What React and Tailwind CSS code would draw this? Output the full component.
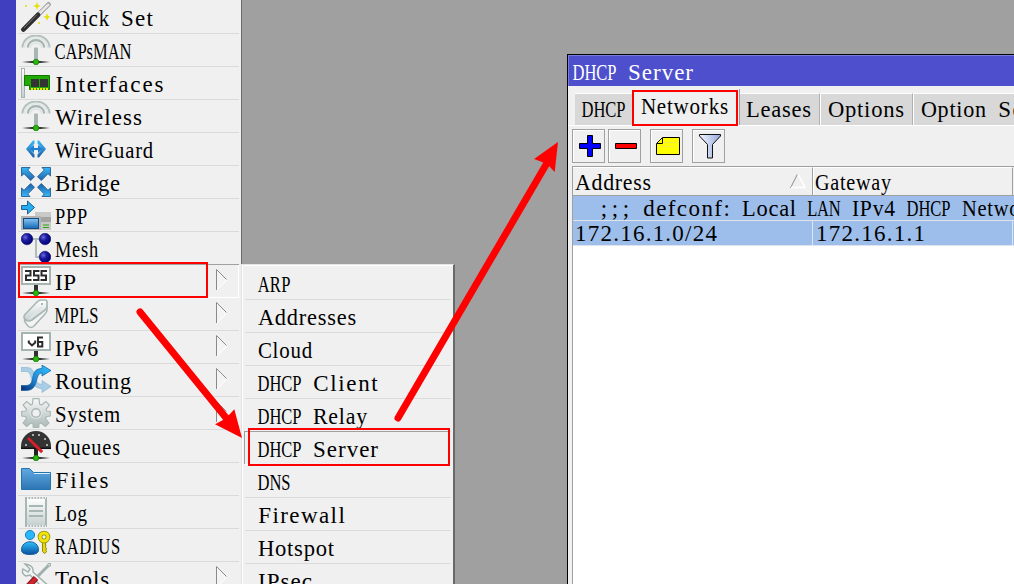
import React from "react";

const CELL = 11;
const ctx = document.createElement("canvas").getContext("2d");

// Fits a word in a row of fixed-width character cells.
function Word({ children }) {
  ctx.font = '23px "Liberation Serif"';
  const n = children.length;
  const natural = ctx.measureText(children).width;
  const scale = Math.min(1, Math.max(0.72, ((CELL * n) / natural) * 0.93));
  const spacing = CELL / scale - natural / n;
  return (
    <span className="inline-block" style={{ width: CELL * n }}>
      <span
        className="inline-block origin-left font-['Liberation_Serif',serif] text-[23px] leading-[26px]"
        style={{ letterSpacing: spacing, transform: `translateX(${(spacing * scale) / 2 - 0.5}px) scaleX(${scale})` }}
      >
        {children}
      </span>
    </span>
  );
}

function T({ children, className = "" }) {
  return (
    <span className={"block whitespace-pre font-['Liberation_Mono',monospace] text-[18.33px] leading-[26px] " + className}>
      {children.split(/( +)/).map((p, i) => (p.trim() ? <Word key={i}>{p}</Word> : p))}
    </span>
  );
}

function Defs() {
  const g = (id, a, b, horizontal) => (
    <linearGradient id={id} x1="0" y1="0" x2={horizontal ? 1 : 0} y2={horizontal ? 0 : 1}>
      <stop offset="0" stopColor={a} />
      <stop offset="1" stopColor={b} />
    </linearGradient>
  );
  return (
    <svg className="absolute h-0 w-0">
      <defs>
        {g("blue", "#2fc0ff", "#0b4f9c")}
        {g("sky", "#35b8fb", "#235fa3")}
        {g("folder", "#62a9e2", "#2b75b3")}
        {g("screen", "#86c5f5", "#1468b4")}
        {g("gray", "#ffffff", "#c5cfcf")}
        {g("funnel", "#f4f7ff", "#94a9dc", true)}
        <linearGradient id="gear" gradientUnits="userSpaceOnUse" x1="0" y1="0" x2="0" y2="30">
          <stop offset="0" stopColor="#fafafa" />
          <stop offset="1" stopColor="#a9b8b5" />
        </linearGradient>
        <linearGradient id="route" x1="0" y1="1" x2="1" y2="0">
          <stop offset="0" stopColor="#082a70" />
          <stop offset=".45" stopColor="#1e8ad8" />
          <stop offset="1" stopColor="#2fc2ff" />
        </linearGradient>
        <radialGradient id="ball" cx=".35" cy=".35" r=".6">
          <stop offset="0" stopColor="#6c6cd8" />
          <stop offset=".5" stopColor="#1a1aa0" />
          <stop offset="1" stopColor="#05057a" />
        </radialGradient>
        <linearGradient id="wire" x1="0" x2="1" y1="0" y2="0">
          <stop offset="0" stopColor="#333" stopOpacity="0" />
          <stop offset=".35" stopColor="#333" />
          <stop offset=".65" stopColor="#333" />
          <stop offset="1" stopColor="#333" stopOpacity="0" />
        </linearGradient>
      </defs>
    </svg>
  );
}

const Node = () => (
  <>
    <rect x="1" y="26" width="28" height="2" fill="url(#wire)" />
    <circle cx="15" cy="27" r="2.8" fill="#28b80c" stroke="#187c06" strokeWidth=".8" />
  </>
);

const Antenna = () => (
  <>
    <path d="M1.5 12.5a13.5 12 0 0 1 27 0" fill="none" stroke="#b3c0be" strokeWidth="2" />
    <path d="M3.3 13a11.7 10.3 0 0 1 23.4 0" fill="none" stroke="#e2e7e6" strokeWidth="1.5" />
    <path d="M6.8 12.5a8.2 7.4 0 0 1 16.4 0" fill="none" stroke="#a5b4b1" strokeWidth="2.2" />
    <path d="M9.2 13a5.8 5 0 0 1 11.6 0" fill="none" stroke="#dde3e2" strokeWidth="1.5" />
    <rect x="13" y="12.5" width="4" height="12" rx="1" fill="#a9b7b4" />
    <Node />
  </>
);

const bridgeArrow = "M.5.5H9L6.7 3 13.5 9.7 9.7 13.5 3 6.7.5 9Z";

const icons = {
  wand: (
    <>
      <path d="M2.5 27.5 27.5 2.500" stroke="#8f8f8f" strokeWidth="4.500" strokeLinecap="round" />
      <path d="M17.5 12.3 27.3 2.8" stroke="#e7e7e7" strokeWidth="2.800" strokeLinecap="round" />
      <path d="M2.5 27.5 17 12.8" stroke="#2f2f2f" strokeWidth="4.6" strokeLinecap="round" />
      <path d="M3 26 16 12.6" stroke="#777" strokeWidth="1" />
      <path d="M16 0l1.1 2.9L20 4l-2.9 1.1L16 8l-1.1-2.9L12 4l2.9-1.1ZM26 11l1.1 2.9L30 15l-2.9 1.1L26 19l-1.1-2.9L22 15l2.9-1.1Z" fill="#e3e10a" />
      <path d="M4 3h2v2H4ZM17 20h2v2h-2Z" fill="#e6e43c" />
    </>
  ),
  antenna: <Antenna />,
  card: (
    <>
      <rect x=".5" y=".5" width="3" height="29" fill="url(#gray)" stroke="#a6b3b1" />
      <path d="M3.5 7.5h25v14h-20v-4h-5Z" fill="#22aa04" stroke="#157503" />
      <path d="M10 11h8v8h-8ZM19 11h8v8h-8Z" fill="#333" />
      <path d="M10 21h18" stroke="#f0e800" strokeWidth="2" strokeDasharray="2 1" />
    </>
  ),
  wireguard: (
    <>
      <path d="M12 6.500h1.500v3L8.500 15l5 5.500v3H12L5 15ZM18 6.500h-1.500v3l5 5.500-5 5.500v3H18L25 15Z" fill="url(#sky)" />
      <path d="M8 15l5-4v3h4v-3l5 4-5 4v-3h-4v3Z" fill="#1c80d4" />
    </>
  ),
  bridge: (
    <g fill="url(#sky)" stroke="#235f96" strokeWidth=".9">
      <path d={bridgeArrow} />
      <path d={bridgeArrow} transform="matrix(-1 0 0 1 30 0)" />
      <path d={bridgeArrow} transform="matrix(1 0 0 -1 0 30)" />
      <path d={bridgeArrow} transform="matrix(-1 0 0 -1 30 30)" />
    </g>
  ),
  ppp: (
    <>
      <rect x="14" y="12" width="16" height="18" fill="#c9c9c9" />
      <path d="M20 19.500h10" stroke="#a3a3a3" strokeWidth="5" />
      <path d="M22 25h6M22 27.500h6" stroke="#28a70c" />
      <rect x="0" y="16" width="20" height="14" fill="#b3b3b3" />
      <rect x="2.500" y="18.500" width="15" height="10" fill="url(#screen)" stroke="#114c86" />
      <path d="M.5 5.500h6v-4.500l7 6.500-7 6.500V9.500h-6Z" fill="#25aef2" stroke="#1c6299" />
    </>
  ),
  mesh: (
    <>
      <path d="M6 6h18M15 6v18h9" fill="none" stroke="#b0bdba" strokeWidth="2" />
      <circle cx="6" cy="6" r="5.800" fill="url(#ball)" stroke="#00006a" strokeWidth=".5" />
      <circle cx="24" cy="6" r="5.800" fill="url(#ball)" stroke="#00006a" strokeWidth=".5" />
      <circle cx="24" cy="24" r="5.800" fill="url(#ball)" stroke="#00006a" strokeWidth=".5" />
    </>
  ),
  ip: (
    <>
      <rect x="1" y="1" width="28" height="17" fill="#fff" stroke="#a6b4b1" strokeWidth="2" />
      <path d="M4 5H9.500V9.500H5V14H10.500M18.500 5H13V9.500h4.500V14H12M26 5H20.500V9.500H25V14H19.500" fill="none" stroke="#2c2c2c" strokeWidth="2" />
      <rect x="13" y="19" width="4" height="7" fill="#303030" />
      <Node />
    </>
  ),
  mpls: (
    <g stroke="#a9b7b4" strokeWidth="1.600" strokeLinejoin="round">
      <path d="M3.500 17 16 3q2-2 4-2h4q2 0 2 2v4q0 2-2 4L13 23q-3 3-6 0t-3.500-6Z" fill="#f3f5f5" transform="translate(0 4)" />
      <path d="M3.500 16 16 3q2-2 4-2h4q2 0 2 2v4q0 2-2 4L11 21q-3 2-6 0t-1.500-5Z" fill="url(#gray)" />
      <path d="M9 20 21 8" stroke="#dfe5e4" />
      <circle cx="21" cy="5" r="1" fill="#93a5a1" stroke="none" />
    </g>
  ),
  ipv6: (
    <>
      <rect x="1" y="1" width="28" height="17" fill="#fff" stroke="#a6b4b1" strokeWidth="2" />
      <path d="M7.800 8.500v2l3.200 3 3.200-3v-2M22 5.500h-5v9h4.300V10H17" fill="none" stroke="#2c2c2c" strokeWidth="2" />
      <rect x="13" y="19" width="4" height="7" fill="#303030" />
      <Node />
    </>
  ),
  routing: (
    <>
      <path d="M0 2.500h6c11 0 5 17 15 17V15.500l9 6-9 6v-4c-14 0-8-17-16-17H0Z" fill="#a9cde5" stroke="#8db8d6" strokeWidth=".7" />
      <path d="M0 25.500v-5h5C16 20.500 7 3.500 21 3.500V0l9 5.500-9 5.500V8C13 8 19 25.500 5 25.500Z" fill="url(#route)" stroke="#135f9c" strokeWidth=".7" />
    </>
  ),
  gear: (
    <>
      <g fill="url(#gear)" stroke="#a9b8b5" strokeWidth="1.200">
        <path d="M12 .7h6l.6 5.500 2 .8 4.300-3.400 3.500 3.500-3.400 4.300.8 1.600 3.500.500v4.500l-4 .700-.8 2 3.400 4.200-3.500 3.500-4.300-3.400-2 .800-.500 4.500h-5.200l-.5-4.500-2-.8-4.300 3.400-3.500-3.500 3.400-4.200-.8-2-4-.7v-4.500l4-.5.8-1.600-3.400-4.300 3.500-3.500 4.300 3.400 1.500-.8Z" />
      </g>
      <circle cx="15" cy="15" r="6" fill="#dfe5e4" />
      <circle cx="15" cy="15" r="4.300" fill="#f0f0f0" stroke="#a9b8b5" strokeWidth="1.500" />
    </>
  ),
  gauge: (
    <>
      <path d="M0 18v-3a15 15 0 0 1 30 0v3Z" fill="#343434" />
      <path d="M0 17.300h30" stroke="#111" strokeWidth="1.500" />
      <path d="M4 13h2v2H4ZM11 3h2v2h-2ZM17 3h2v2h-2ZM23 7h2v2h-2ZM25 13h2v2h-2Z" fill="#aaa" />
      <path d="M7 7 21 21" stroke="#d71e2a" strokeWidth="2.600" />
      <rect x="13" y="18" width="4" height="8" fill="#222" />
      <path d="M13 13l8 8" stroke="#d71e2a" strokeWidth="2.600" />
      <Node />
    </>
  ),
  folder: (
    <>
      <path d="M.5 4.500h8l4 4h17v17H.5Z" fill="url(#folder)" stroke="#2674ad" />
      <path d="M13 9.500h16" stroke="#d8ecfa" />
    </>
  ),
  log: (
    <>
      <path d="M5 1h20v28H5Z" fill="url(#gray)" stroke="#a9b7b4" strokeWidth="2" />
      <path d="M6 1h19M6 29h19" stroke="#efefef" strokeWidth="2" strokeDasharray="1.500 1.500" />
      <path d="M8 9h14M8 14h14M8 19h14" stroke="#a9b7b4" strokeWidth="2" />
    </>
  ),
  radius: (
    <>
      <circle cx="9" cy="5" r="4.600" fill="#28b7fa" stroke="#217fbd" />
      <path d="M.5 20c0-11 17-11 17 0q0 4.500-8.500 4.500T.5 20Z" fill="url(#blue)" stroke="#1b619c" />
      <path d="M21.500 11v10.500l1.800 2 2.400-1.800-1-1.500 1-1.200-1-1.500V11" fill="#e3d80a" stroke="#938c0b" />
      <circle cx="23" cy="7" r="4" fill="none" stroke="#938c0b" strokeWidth="4.600" />
      <circle cx="23" cy="7" r="4" fill="none" stroke="#efe50a" strokeWidth="3" />
    </>
  ),
  tools: (
    <>
      <path d="M29 1 15 15" stroke="#9fafac" strokeWidth="3" />
      <path d="M27 .500h2.500V3H27Z" fill="#e4e8e7" stroke="#9fafac" />
      <path d="M4 1 9 6 7 9 2 6Q0 11 5 13l4-1L26 29l4-4L12 9q1-7-8-8Z" fill="#f2f4f4" stroke="#9fafac" strokeWidth="1.400" />
      <path d="M15 15 2 29" stroke="#7f1119" strokeWidth="6" />
      <path d="M15 15 2 29" stroke="#cf2430" strokeWidth="4" />
    </>
  ),
};

const MENU = [
  ["wand", "Quick Set"],
  ["antenna", "CAPsMAN"],
  ["card", "Interfaces"],
  ["antenna", "Wireless"],
  ["wireguard", "WireGuard"],
  ["bridge", "Bridge"],
  ["ppp", "PPP"],
  ["mesh", "Mesh"],
  ["ip", "IP", true],
  ["mpls", "MPLS", true],
  ["ipv6", "IPv6", true],
  ["routing", "Routing", true],
  ["gear", "System", true],
  ["gauge", "Queues"],
  ["folder", "Files"],
  ["log", "Log"],
  ["radius", "RADIUS"],
  ["tools", "Tools", true],
];

const SUBMENU = ["ARP", "Addresses", "Cloud", "DHCP Client", "DHCP Relay", "DHCP Server", "DNS", "Firewall", "Hotspot", "IPsec"];

function MenuRow({ icon, label, sub }) {
  const active = label === "IP";
  return (
    <div
      className={
        "flex h-[33px] shrink-0 items-center border-b pl-[3px] " +
        (active ? "border-r border-white shadow-[0_-1px_0_#a0a0a0]" : "border-[#dadada]")
      }
    >
      <svg className="h-[30px] w-[30px] shrink-0" viewBox="0 0 30 30" fill="none">{icons[icon]}</svg>
      <T className="ml-1 grow pt-[6px] text-black">{label}</T>
      {sub && (
        <svg className={"mb-0.5 h-[22px] w-[12px] shrink-0 " + (active ? "mr-[10px]" : "mr-[11px]")} viewBox="0 0 12 22">
          <path d="M.5.5v21L11.500 11Z" fill="#f4f4f4" />
          <path d="M1 21 11 11" stroke="#fff" />
          <path d="M.5 21V.5L10.500 10.500" fill="none" stroke="#8a8a8a" />
        </svg>
      )}
    </div>
  );
}

function ToolButton({ children, className = "" }) {
  return (
    <div className={"flex h-[34px] w-[33px] items-center justify-center border border-[#a0a0a0] bg-[#f0f0f0] pl-[2px] shadow-[inset_1px_1px_0_#fff] " + className}>
      {children}
    </div>
  );
}

function Tab({ children, className }) {
  return <div className={"h-8 shrink-0 border-t border-t-white bg-[#d8d8d8] pt-[3px] text-black " + className}><T>{children}</T></div>;
}

function DhcpWindow() {
  return (
    <section className="absolute left-[567px] top-[54px] flex h-[530px] w-[447px] flex-col overflow-hidden border-l border-t border-black bg-[#f0f0f0]">
      <header className="h-[31px] shrink-0 border-l border-t border-[#7b7ce0] bg-[#4d4fcc] pl-1 pt-1">
        <T className="text-white">DHCP Server</T>
      </header>
      <nav className="flex h-10 shrink-0 items-end border-b border-white pl-[7px] text-black">
        <Tab className="w-[57px] pl-[7px]">DHCP</Tab>
        <div className="h-9 w-[108px] shrink-0 border-r border-[#a0a0a0] bg-[#f0f0f0] pl-[9px] pt-[5px]">
          <T>Networks</T>
        </div>
        <Tab className="w-[80px] border-r border-r-[#b0b0b0] pl-[6px]">Leases</Tab>
        <Tab className="w-[93px] border-l border-r border-l-white border-r-[#b0b0b0] pl-[7px]">Options</Tab>
        <Tab className="w-[140px] border-l border-l-white pl-[7px]">Option Sets</Tab>
      </nav>
      <div className="flex h-10 shrink-0 items-start pl-1 pt-[3px]">
        <ToolButton>
          <svg width="22" height="22" viewBox="0 0 22 22"><path d="M8.500.5h5v8h8v5h-8v8h-5v-8h-8v-5h8Z" fill="#00f" stroke="#000" /></svg>
        </ToolButton>
        <ToolButton className="ml-[3px]">
          <svg width="22" height="6" viewBox="0 0 22 6"><path d="M.5.5h21v5H.5Z" fill="#f00" stroke="#000" /></svg>
        </ToolButton>
        <ToolButton className="ml-[9px]">
          <svg width="24" height="19" viewBox="0 0 24 19"><path d="M6.500.5h17v17H.5v-11Z" fill="#ff0" stroke="#000" /><path d="M6.500 1v5.500H1" fill="none" stroke="#000" /><path d="M8 5.500h12M4 9.500h15" stroke="#eee75b" strokeDasharray="4 1" /></svg>
        </ToolButton>
        <ToolButton className="ml-[9px]">
          <svg width="22" height="25" viewBox="0 0 22 25"><path d="M.5.5h21v1.500l-8 8.500v13.500h-5V10.500l-8-8.500Z" fill="url(#funnel)" stroke="#111" /></svg>
        </ToolButton>
      </div>
      <div className="ml-1 flex grow flex-col border-l border-t border-[#a0a0a0] bg-white text-black">
        <div className="flex h-[29px] shrink-0 border-b border-[#a0a0a0] bg-[#f0f0f0]">
          <div className="flex w-[240px] border-r border-t border-r-[#a0a0a0] border-t-white pl-0.5">
            <T className="grow pt-0.5">Address</T>
            <svg className="mr-[6px] mt-[5px]" width="16" height="16" viewBox="0 0 16 16"><path d="M.5 15 7.500 1" stroke="#8a8a8a" fill="none" /><path d="M8 1l7 13.500H1" stroke="#fff" strokeWidth="1.500" fill="none" /></svg>
          </div>
          <div className="w-[200px] border-l border-r border-t border-l-white border-r-[#a0a0a0] border-t-white pl-px"><T className="pt-0.5">Gateway</T></div>
        </div>
        <div className="h-[25px] shrink-0 overflow-hidden border-b border-[#dfe3ea] bg-[#9dbeea] pl-[26px]"><T>;;; defconf: Local LAN IPv4 DHCP Network</T></div>
        <div className="flex h-[25px] shrink-0 border-b border-[#dfe3ea] bg-[#9dbeea]">
          <div className="w-[240px] border-r border-[#dfe3ea] pl-[2px]"><T>172.16.1.0/24</T></div>
          <div className="w-[200px] border-r border-[#dfe3ea] pl-[3px]"><T>172.16.1.1</T></div>
        </div>
      </div>
    </section>
  );
}

export default function App() {
  return (
    <main className="relative flex h-[584px] w-[1014px] overflow-hidden bg-[#a0a0a0]">
      <Defs />
      <div className="w-4 shrink-0 bg-[#3f3fbf]" />
      <aside className="flex w-[226px] shrink-0 flex-col border-r border-[#696969] bg-[#f0f0f0] pl-0.5 pr-0.5 pt-px">
        {MENU.map(([icon, label, sub]) => <MenuRow key={label} icon={icon} label={label} sub={sub} />)}
      </aside>

      <div className="absolute left-[241px] top-[264px] flex h-[330px] w-[214px] flex-col border-r-2 border-t border-r-[#696969] border-t-[#e3e3e3] bg-[#f0f0f0] pl-1 pr-0.5 text-black shadow-[inset_1px_0_0_#e3e3e3,inset_2px_1px_0_#fff]">
        {SUBMENU.map((s) => (
          <div
            key={s}
            className={
              "shrink-0 border-b pl-[13px] " +
              (s === "ARP" ? "h-[35px] pt-[7px] " : "h-[33px] pt-[5px] ") +
              (s === "DHCP Server" ? "border-white shadow-[-1px_-1px_0_#a0a0a0]" : "border-[#dadada]")
            }
          >
            <T>{s}</T>
          </div>
        ))}
      </div>

      <DhcpWindow />

      <div className="absolute left-[18px] top-[262px] h-9 w-[190px] border-2 border-[#f00]" />
      <div className="absolute left-[248px] top-[428px] h-[38px] w-[202px] border-2 border-[#f00]" />
      <div className="absolute left-[632px] top-[90px] h-9 w-[106px] border-2 border-[#f00]" />
      <svg className="absolute left-0 top-0" width="1014" height="584" viewBox="0 0 1014 584">
        <g stroke="#f00" strokeWidth="7" strokeLinecap="round">
          <path d="M140 312 227 419" />
          <path d="M398 418 547 163" />
        </g>
        <path d="M242 438 215 424.300 223 420 230 414 234.300 409.300Z" fill="#f00" />
        <path d="M558 142 554.700 172 549 166 542 162 534 159Z" fill="#f00" />
      </svg>
    </main>
  );
}
